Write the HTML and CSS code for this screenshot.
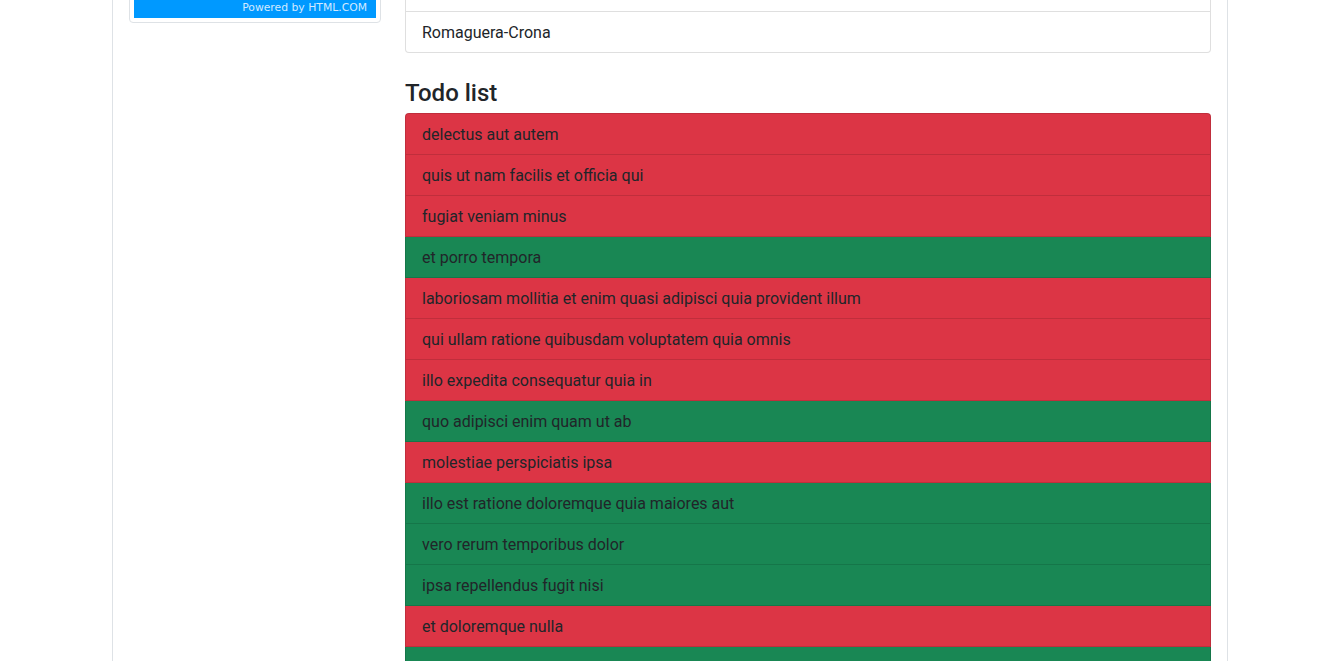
FILE: index.html
```html
<!DOCTYPE html>
<html lang="en">
<head>
<meta charset="utf-8">
<title>User details</title>
<link rel="stylesheet" href="styles.css">
</head>
<body>
<div class="viewport">
  <div class="container">
    <div class="row">
      <aside class="sidebar">
        <div class="widget">
          <div class="widget-bar">
            <span class="powered">Powered by HTML.COM</span>
          </div>
        </div>
      </aside>
      <main class="main">
        <ul class="list-group">
          <li class="list-group-item">Kulas Light</li>
          <li class="list-group-item">Romaguera-Crona</li>
        </ul>
        <h4 class="section-title">Todo list</h4>
        <ul class="list-group">
          <li class="list-group-item todo-open">delectus aut autem</li>
          <li class="list-group-item todo-open">quis ut nam facilis et officia qui</li>
          <li class="list-group-item todo-open">fugiat veniam minus</li>
          <li class="list-group-item todo-done">et porro tempora</li>
          <li class="list-group-item todo-open">laboriosam mollitia et enim quasi adipisci quia provident illum</li>
          <li class="list-group-item todo-open">qui ullam ratione quibusdam voluptatem quia omnis</li>
          <li class="list-group-item todo-open">illo expedita consequatur quia in</li>
          <li class="list-group-item todo-done">quo adipisci enim quam ut ab</li>
          <li class="list-group-item todo-open">molestiae perspiciatis ipsa</li>
          <li class="list-group-item todo-done">illo est ratione doloremque quia maiores aut</li>
          <li class="list-group-item todo-done">vero rerum temporibus dolor</li>
          <li class="list-group-item todo-done">ipsa repellendus fugit nisi</li>
          <li class="list-group-item todo-open">et doloremque nulla</li>
          <li class="list-group-item todo-done">repellendus sunt dolores architecto voluptatum</li>
        </ul>
      </main>
    </div>
  </div>
</div>
</body>
</html>
```
FILE: styles.css
```css
* { box-sizing: border-box; }

html, body {
  margin: 0;
  padding: 0;
}

body {
  font-family: Roboto, "Liberation Sans", sans-serif;
  font-size: 16px;
  line-height: 1.5;
  color: #212529;
  background: #fff;
}

.viewport {
  height: 100vh;
  overflow: hidden;
}

.container {
  width: 1116px;
  margin-left: 112px;
  min-height: 100vh;
  border-left: 1px solid #dee2e6;
  border-right: 1px solid #dee2e6;
  padding: 0 15px 0 16px;
}

/* the page is shown scrolled down a little */
.row {
  display: flex;
  gap: 24px;
  margin-top: -30px;
}

.sidebar {
  width: 252px;
  flex: none;
}

.widget {
  border: 1px solid #dee2e6;
  border-radius: 4px;
  padding: 4px;
}

.widget-bar {
  height: 43px;
  background: #0099ff;
  display: flex;
  align-items: flex-end;
  justify-content: flex-end;
  padding: 0 9px 4px 0;
}

.powered {
  font-family: "DejaVu Sans", sans-serif;
  font-size: 10.8px;
  line-height: 12px;
  color: #d2e9ff;
}

.main {
  width: 806px;
  flex: none;
}

.list-group {
  list-style: none;
  margin: 0;
  padding: 0;
  border-radius: 4px;
}

.list-group-item {
  padding: 9px 16px 7px;
  border: 1px solid rgba(0, 0, 0, 0.125);
  background: #fff;
  line-height: 24px;
}

.list-group-item + .list-group-item {
  border-top-width: 0;
}

.list-group-item:first-child {
  border-top-left-radius: 4px;
  border-top-right-radius: 4px;
}

.list-group-item:last-child {
  border-bottom-left-radius: 4px;
  border-bottom-right-radius: 4px;
}

.section-title {
  margin: 23px 0 5px;
  padding-top: 3px;
  font-size: 24px;
  font-weight: 500;
  line-height: 29px;
}

.todo-open {
  background-color: #dc3545;
}

.todo-done {
  background-color: #198754;
}
```
